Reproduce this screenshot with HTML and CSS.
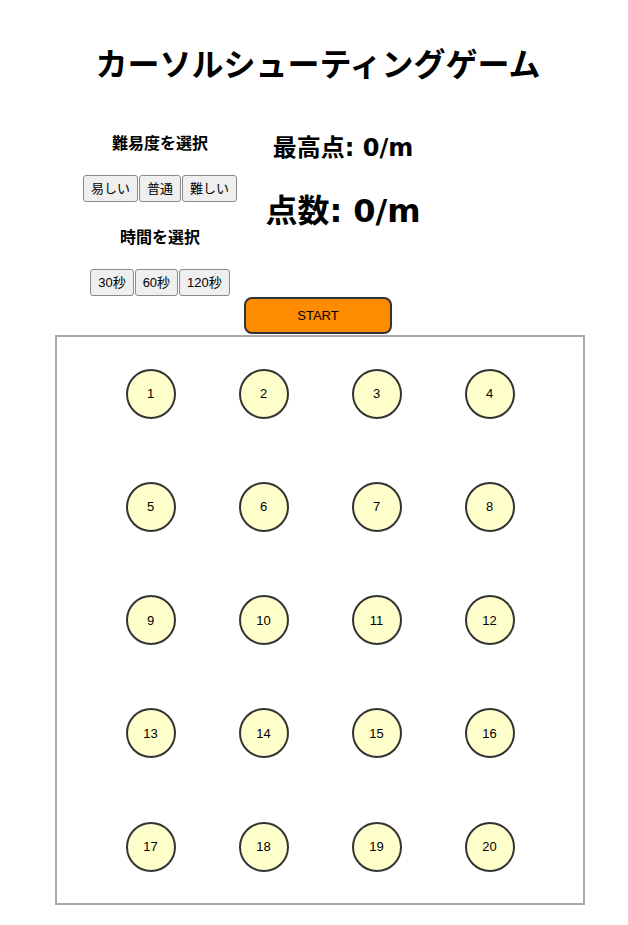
FILE: index.html
```html
<!DOCTYPE html>
<html lang="ja">
<head>
<meta charset="utf-8">
<title>カーソルシューティングゲーム</title>
<link rel="stylesheet" href="styles.css">
</head>
<body>
<h1 class="title">カーソルシューティングゲーム</h1>
<div class="panel">
  <div class="left">
    <h3 class="label">難易度を選択</h3>
    <div class="btns btns-level">
      <button class="btn">易しい</button>
      <button class="btn">普通</button>
      <button class="btn">難しい</button>
    </div>
    <h3 class="label label-time">時間を選択</h3>
    <div class="btns btns-time">
      <button class="btn">30秒</button>
      <button class="btn">60秒</button>
      <button class="btn">120秒</button>
    </div>
  </div>
  <div class="right">
    <h2 class="best">最高点: 0/m</h2>
    <div class="score">点数: 0/m</div>
  </div>
</div>
<div class="start-row">
  <button class="start">START</button>
</div>
<div class="game">
  <div class="target">1</div>
  <div class="target">2</div>
  <div class="target">3</div>
  <div class="target">4</div>
  <div class="target">5</div>
  <div class="target">6</div>
  <div class="target">7</div>
  <div class="target">8</div>
  <div class="target">9</div>
  <div class="target">10</div>
  <div class="target">11</div>
  <div class="target">12</div>
  <div class="target">13</div>
  <div class="target">14</div>
  <div class="target">15</div>
  <div class="target">16</div>
  <div class="target">17</div>
  <div class="target">18</div>
  <div class="target">19</div>
  <div class="target">20</div>
</div>
</body>
</html>
```
FILE: styles.css
```css
html, body {
  margin: 0;
  padding: 0;
  background: #ffffff;
}

body {
  width: 628px;
  font-family: "Liberation Sans", "Noto Sans CJK JP", sans-serif;
  color: #000;
}

.title {
  margin: 0;
  padding: 42px 0 0 8px;
  height: 40px;
  line-height: 40px;
  font-size: 32px;
  font-weight: bold;
  text-align: center;
  font-family: "Noto Sans CJK JP", sans-serif;
}

.panel {
  display: flex;
  margin-top: 50px;
  padding-left: 80px;
}

.left {
  width: 160px;
  display: flex;
  flex-direction: column;
  align-items: center;
}

.label {
  margin: 0;
  font-size: 16px;
  line-height: 20px;
  height: 20px;
  font-weight: bold;
  font-family: "Noto Sans CJK JP", sans-serif;
}

.label-time {
  margin-top: 24px;
}

.btns {
  display: flex;
  gap: 1px;
}

.btns-level {
  margin-top: 23px;
}

.btns-time {
  margin-top: 23px;
}

.btn {
  height: 27px;
  margin: 0;
  padding: 0 7px;
  border: 1px solid #8a8a8a;
  border-radius: 3px;
  background: #efefef;
  color: #000;
  font-size: 13px;
  font-family: "Liberation Sans", "Noto Sans CJK JP", sans-serif;
  line-height: 25px;
}

.right {
  width: 206px;
  display: flex;
  flex-direction: column;
  align-items: center;
}

.best {
  margin: 1px 0 0 0;
  font-size: 24px;
  line-height: 30px;
  font-weight: bold;
  font-family: "DejaVu Sans", "Noto Sans CJK JP", sans-serif;
}

.score {
  margin-top: 28px;
  font-size: 32px;
  line-height: 40px;
  font-weight: bold;
  font-family: "DejaVu Sans", "Noto Sans CJK JP", sans-serif;
}

.start-row {
  display: flex;
  justify-content: center;
  padding-left: 8px;
  margin-top: 1px;
}

.start {
  width: 148px;
  height: 37px;
  margin: 0;
  padding: 0;
  background: #ff8c00;
  border: 2px solid #333;
  border-radius: 8px;
  font-size: 13px;
  font-family: "Liberation Sans", sans-serif;
  color: #000;
}

.game {
  box-sizing: border-box;
  width: 530px;
  height: 570px;
  margin: 1px 0 0 55px;
  border: 2px solid #aaaaaa;
  display: grid;
  grid-template-columns: repeat(4, 50px);
  grid-auto-rows: 50px;
  column-gap: 63px;
  row-gap: 63.25px;
  justify-content: center;
  align-content: center;
}

.target {
  box-sizing: border-box;
  width: 50px;
  height: 50px;
  border-radius: 50%;
  border: 2px solid #333;
  background: #ffffcc;
  display: flex;
  align-items: center;
  justify-content: center;
  font-size: 13px;
  font-family: "Liberation Sans", sans-serif;
}
```
